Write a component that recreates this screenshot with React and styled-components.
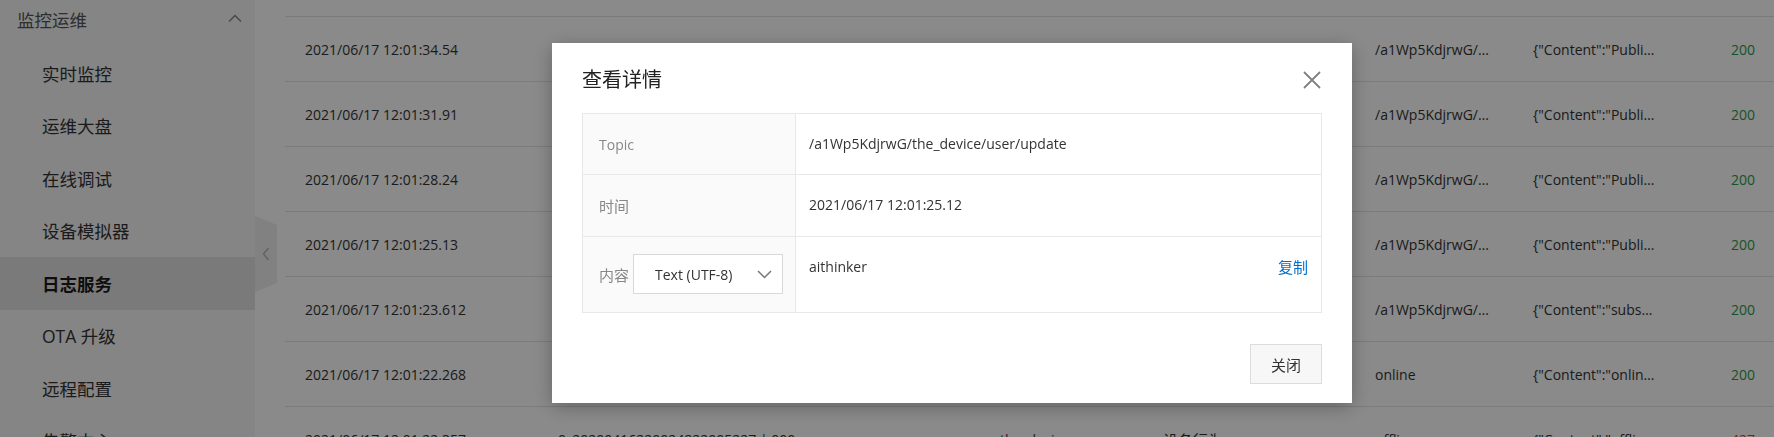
import React from 'react';
import styled, { createGlobalStyle } from 'styled-components';

const GlobalStyle = createGlobalStyle`
  html, body { margin: 0; padding: 0; background: #fff; }
  body { font-family: "Open Sans", "Noto Sans CJK SC", sans-serif; color: #333; }
  * { box-sizing: border-box; }
`;

const Page = styled.div`
  display: flex;
  width: 1774px;
  height: 437px;
  overflow: hidden;
  background: #fff;
`;

const Sidebar = styled.nav`
  width: 255px;
  flex: none;
  background: #f5f5f5;
  display: flex;
  flex-direction: column;
`;

const GroupHeader = styled.div`
  height: 47px;
  flex: none;
  display: flex;
  align-items: flex-start;
  justify-content: space-between;
  padding: 8px 13px 0 17px;
  font-size: 17.5px;
  line-height: 25px;
  color: #555;
`;

const UpChevron = styled.svg`
  width: 14px;
  height: 8px;
  margin-top: 6px;
`;

const MenuItem = styled.div`
  height: 52.5px;
  flex: none;
  display: flex;
  align-items: center;
  padding-left: 42px;
  font-size: 17.5px;
  color: ${(p) => (p.$active ? '#1a1a1a' : '#333')};
  font-weight: ${(p) => (p.$active ? 700 : 400)};
  background: ${(p) => (p.$active ? '#e2e2e2' : 'transparent')};
`;

const Main = styled.main`
  flex: 1;
  position: relative;
  overflow: hidden;
`;

const CollapseHandle = styled.div`
  position: absolute;
  left: 0;
  top: 216px;
  width: 22px;
  height: 76px;
  background: #efefef;
  clip-path: polygon(0 0, 100% 9px, 100% 67px, 0 100%);
  display: flex;
  align-items: center;
  justify-content: center;
`;

const LogTable = styled.div`
  margin: -48px 0 0 30px;
  display: flex;
  flex-direction: column;
`;

const LogRow = styled.div`
  display: grid;
  grid-template-columns: 253px 442px 163px 212px 158px 198px 1fr;
  height: 65px;
  flex: none;
  align-items: center;
  border-bottom: 1px solid #e4e4e4;
  font-size: 14px;
  color: #333;
`;

const LogCell = styled.div`
  padding: 0 20px;
  white-space: nowrap;
  overflow: hidden;
  font-size: ${(p) => (p.$cjk ? '15px' : '14px')};
  text-align: ${(p) => (p.$right ? 'right' : 'left')};
  color: ${(p) => p.$color || 'inherit'};
`;

const Overlay = styled.div`
  position: fixed;
  inset: 0;
  background: rgba(0, 0, 0, 0.46);
`;

const Modal = styled.div`
  position: fixed;
  left: 552px;
  top: 43px;
  width: 800px;
  height: 360px;
  background: #fff;
  box-shadow: 0 4px 18px rgba(0, 0, 0, 0.28);
  padding: 0 30px;
  display: flex;
  flex-direction: column;
`;

const ModalHeader = styled.div`
  height: 70px;
  flex: none;
  padding-top: 3px;
  display: flex;
  align-items: center;
  justify-content: space-between;
`;

const ModalTitle = styled.div`
  font-size: 20px;
  line-height: 28px;
  color: #222;
`;

const CloseIcon = styled.svg`
  width: 18px;
  height: 18px;
  margin-right: 1px;
`;

const DetailTable = styled.div`
  border: 1px solid #e8e8e8;
  display: flex;
  flex-direction: column;
  flex: none;
`;

const DetailRow = styled.div`
  display: flex;
  & + & { border-top: 1px solid #e8e8e8; }
`;

const DetailLabel = styled.div`
  width: 213px;
  flex: none;
  background: #fafafa;
  border-right: 1px solid #e8e8e8;
  display: flex;
  align-items: center;
  gap: 4px;
  padding: ${(p) => (p.$tall ? '17px 12px 18px 16px' : '0 16px')};
  font-size: ${(p) => (p.$cjk ? '15px' : '14px')};
  white-space: nowrap;
  color: #888;
`;

const LabelText = styled.span`
  font-size: 15px;
  white-space: nowrap;
  flex: none;
`;

const DetailValue = styled.div`
  flex: 1;
  display: flex;
  justify-content: space-between;
  align-items: flex-start;
  padding: 19px 13px ${(p) => (p.$extra ? '20px' : '19px')};
  line-height: 22px;
  font-size: 14px;
  color: #333;
`;

const CopyLink = styled.a`
  color: #0070cc;
  font-size: 15px;
  cursor: pointer;
`;

const SelectBox = styled.div`
  width: 150px;
  height: 40px;
  flex: none;
  border: 1px solid #d9d9d9;
  background: #fff;
  display: flex;
  align-items: center;
  justify-content: space-between;
  padding: 0 10px 0 21px;
  font-size: 14px;
  color: #333;
`;

const DownChevron = styled.svg`
  width: 15px;
  height: 9px;
`;

const ModalFooter = styled.div`
  display: flex;
  justify-content: flex-end;
  padding-top: 31px;
`;

const Button = styled.button`
  width: 72px;
  height: 40px;
  background: #f7f7f7;
  border: 1px solid #dcdcdc;
  font-family: inherit;
  font-size: 15px;
  color: #333;
  padding: 0;
`;

const menu = ['实时监控', '运维大盘', '在线调试', '设备模拟器', '日志服务', 'OTA 升级', '远程配置', '告警中心'];

const logs = [
  ['2021/06/17 12:01:37.28', 'd0_2021061712013728', 'the_device', '设备上报消息', '/a1Wp5KdjrwG/…', '{"Content":"Publi…', '200'],
  ['2021/06/17 12:01:34.54', 'd0_2021061712013454', 'the_device', '设备上报消息', '/a1Wp5KdjrwG/…', '{"Content":"Publi…', '200'],
  ['2021/06/17 12:01:31.91', 'd0_2021061712013191', 'the_device', '设备上报消息', '/a1Wp5KdjrwG/…', '{"Content":"Publi…', '200'],
  ['2021/06/17 12:01:28.24', 'd0_2021061712012824', 'the_device', '设备上报消息', '/a1Wp5KdjrwG/…', '{"Content":"Publi…', '200'],
  ['2021/06/17 12:01:25.13', 'd0_2021061712012513', 'the_device', '设备上报消息', '/a1Wp5KdjrwG/…', '{"Content":"Publi…', '200'],
  ['2021/06/17 12:01:23.612', 'd0_20210617120123612', 'the_device', '订阅', '/a1Wp5KdjrwG/…', '{"Content":"subs…', '200'],
  ['2021/06/17 12:01:22.268', 'd0_20210617120122268', 'the_device', '设备行为', 'online', '{"Content":"onlin…', '200'],
  ['2021/06/17 12:01:22.357', '0_20200416220024822005227 | 000', 'the_device', '设备行为', 'offline', '{"Content":"offli…', '427'],
];

export default function App() {
  return (
    <>
      <GlobalStyle />
      <Page>
        <Sidebar>
          <GroupHeader>
            <span>监控运维</span>
            <UpChevron viewBox="0 0 14 8">
              <path d="M1 7.5 L7 1.5 L13 7.5" fill="none" stroke="#8a8a8a" strokeWidth="1.5" />
            </UpChevron>
          </GroupHeader>
          {menu.map((m) => (
            <MenuItem key={m} $active={m === '日志服务'}>{m}</MenuItem>
          ))}
        </Sidebar>
        <Main>
          <LogTable>
            {logs.map((r, i) => (
              <LogRow key={i}>
                <LogCell>{r[0]}</LogCell>
                <LogCell>{r[1]}</LogCell>
                <LogCell>{r[2]}</LogCell>
                <LogCell $cjk>{r[3]}</LogCell>
                <LogCell>{r[4]}</LogCell>
                <LogCell>{r[5]}</LogCell>
                <LogCell $right $color={r[6] === '200' ? '#2c9a48' : '#e2452d'}>{r[6]}</LogCell>
              </LogRow>
            ))}
          </LogTable>
          <CollapseHandle>
            <svg width="8" height="14" viewBox="0 0 8 14">
              <path d="M6.5 1 L1.5 7 L6.5 13" fill="none" stroke="#b5b5b5" strokeWidth="1.5" />
            </svg>
          </CollapseHandle>
        </Main>
      </Page>
      <Overlay />
      <Modal>
        <ModalHeader>
          <ModalTitle>查看详情</ModalTitle>
          <CloseIcon viewBox="0 0 18 18">
            <path d="M1 1 L17 17 M17 1 L1 17" stroke="#808080" strokeWidth="1.8" fill="none" />
          </CloseIcon>
        </ModalHeader>
        <DetailTable>
          <DetailRow>
            <DetailLabel>Topic</DetailLabel>
            <DetailValue>/a1Wp5KdjrwG/the_device/user/update</DetailValue>
          </DetailRow>
          <DetailRow>
            <DetailLabel $cjk>时间</DetailLabel>
            <DetailValue $extra>2021/06/17 12:01:25.12</DetailValue>
          </DetailRow>
          <DetailRow>
            <DetailLabel $tall>
              <LabelText>内容</LabelText>
              <SelectBox>
                <span>Text (UTF-8)</span>
                <DownChevron viewBox="0 0 15 9">
                  <path d="M1 1 L7.5 7.5 L14 1" fill="none" stroke="#777" strokeWidth="1.5" />
                </DownChevron>
              </SelectBox>
            </DetailLabel>
            <DetailValue>
              <span>aithinker</span>
              <CopyLink>复制</CopyLink>
            </DetailValue>
          </DetailRow>
        </DetailTable>
        <ModalFooter>
          <Button>关闭</Button>
        </ModalFooter>
      </Modal>
    </>
  );
}
